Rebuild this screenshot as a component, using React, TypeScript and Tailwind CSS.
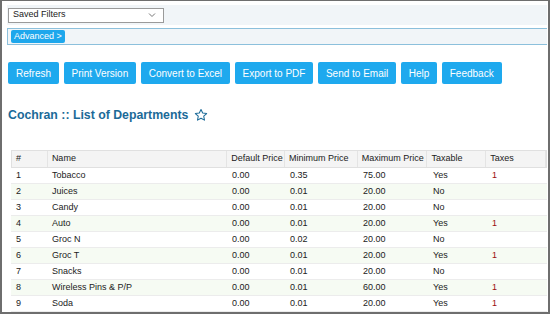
import React from 'react';

const buttons = ['Refresh', 'Print Version', 'Convert to Excel', 'Export to PDF', 'Send to Email', 'Help', 'Feedback'];

const rows = [
  ['1', 'Tobacco', '0.00', '0.35', '75.00', 'Yes', '1'],
  ['2', 'Juices', '0.00', '0.01', '20.00', 'No', ''],
  ['3', 'Candy', '0.00', '0.01', '20.00', 'No', ''],
  ['4', 'Auto', '0.00', '0.01', '20.00', 'Yes', '1'],
  ['5', 'Groc N', '0.00', '0.02', '20.00', 'No', ''],
  ['6', 'Groc T', '0.00', '0.01', '20.00', 'Yes', '1'],
  ['7', 'Snacks', '0.00', '0.01', '20.00', 'No', ''],
  ['8', 'Wireless Pins & P/P', '0.00', '0.01', '60.00', 'Yes', '1'],
  ['9', 'Soda', '0.00', '0.01', '20.00', 'Yes', '1'],
];

const headers = ['#', 'Name', 'Default Price', 'Minimum Price', 'Maximum Price', 'Taxable', 'Taxes'];
const widths = ['w-[36px]', 'w-[180px]', 'w-[58px]', 'w-[73px]', 'w-[70px]', 'w-[59px]', 'w-[60px]'];

export default function App() {
  return (
    <div className="w-[550px] h-[314px] overflow-hidden bg-white border-2 border-t border-[#6e6e6e] font-['Liberation_Sans',Arial,sans-serif] text-[#222]">
      <div className="pl-[5px] pr-[1px]">
        {/* saved filters */}
        <div className="mt-[4px] h-[20px] bg-[#f1f5f8] flex items-center pl-[1px]">
          <div className="w-[156px] h-[15px] bg-white border border-[#9a9a9a] flex items-center justify-between px-[4px] text-[9px] text-[#222]">
            <span>Saved Filters</span>
            <svg width="8" height="6" viewBox="0 0 8 6" className="mr-[3px]">
              <path d="M1 1.5 L4 4.5 L7 1.5" fill="none" stroke="#777" strokeWidth="1" />
            </svg>
          </div>
        </div>
        {/* advanced */}
        <div className="mt-[3px] h-[17px] bg-[#f1f5f8] border-y border-l border-[#8cc0dc] flex items-center pl-[3px]">
          <div className="h-[13px] px-[3px] bg-[#1ea7ec] text-white text-[9px] rounded-[2px] flex items-center">Advanced &gt;</div>
        </div>
        {/* buttons */}
        <div className="mt-[17px] flex gap-[4.5px] pl-[1px]">
          {buttons.map((b) => (
            <div key={b} className="h-[22px] px-[8px] bg-[#1ea9ee] text-white text-[10px] rounded-[2px] flex items-center">
              {b}
            </div>
          ))}
        </div>
        {/* title */}
        <div className="mt-[23px] pl-[1px] flex items-center gap-[6px] text-[12.3px] font-bold text-[#1b6a98] leading-[16px]">
          <span>Cochran :: List of Departments</span>
          <svg width="14" height="14" viewBox="0 0 24 24">
            <path d="M12 2.5l2.9 6.2 6.8.8-5 4.6 1.3 6.7L12 17.5l-6 3.3 1.3-6.7-5-4.6 6.8-.8z" fill="none" stroke="#1b6a98" strokeWidth="1.8" strokeLinejoin="round" />
          </svg>
        </div>
        {/* table */}
        <div className="mt-[27px] ml-[4px] text-[9px] text-[#222]">
          <div className="flex h-[18px] bg-[#f4f4f4] border border-[#e0e0e0] items-center">
            {headers.map((h, i) => (
              <div key={h} className={`${widths[i]} h-full flex items-center pl-[4px] border-r border-[#e4e4e4]`}>
                {h}
              </div>
            ))}
          </div>
          {rows.map((r, ri) => (
            <div key={ri} className={`flex h-[16px] items-center border-b border-[#ececec] ${ri % 2 === 1 ? 'bg-[#f6fbf3]' : 'bg-white'}`}>
              {r.map((c, ci) => (
                <div key={ci} className={`${widths[ci]} pl-[5px] ${ci === 6 ? 'text-[#9b1010]' : ''}`}>
                  {c}
                </div>
              ))}
            </div>
          ))}
        </div>
      </div>
    </div>
  );
}
